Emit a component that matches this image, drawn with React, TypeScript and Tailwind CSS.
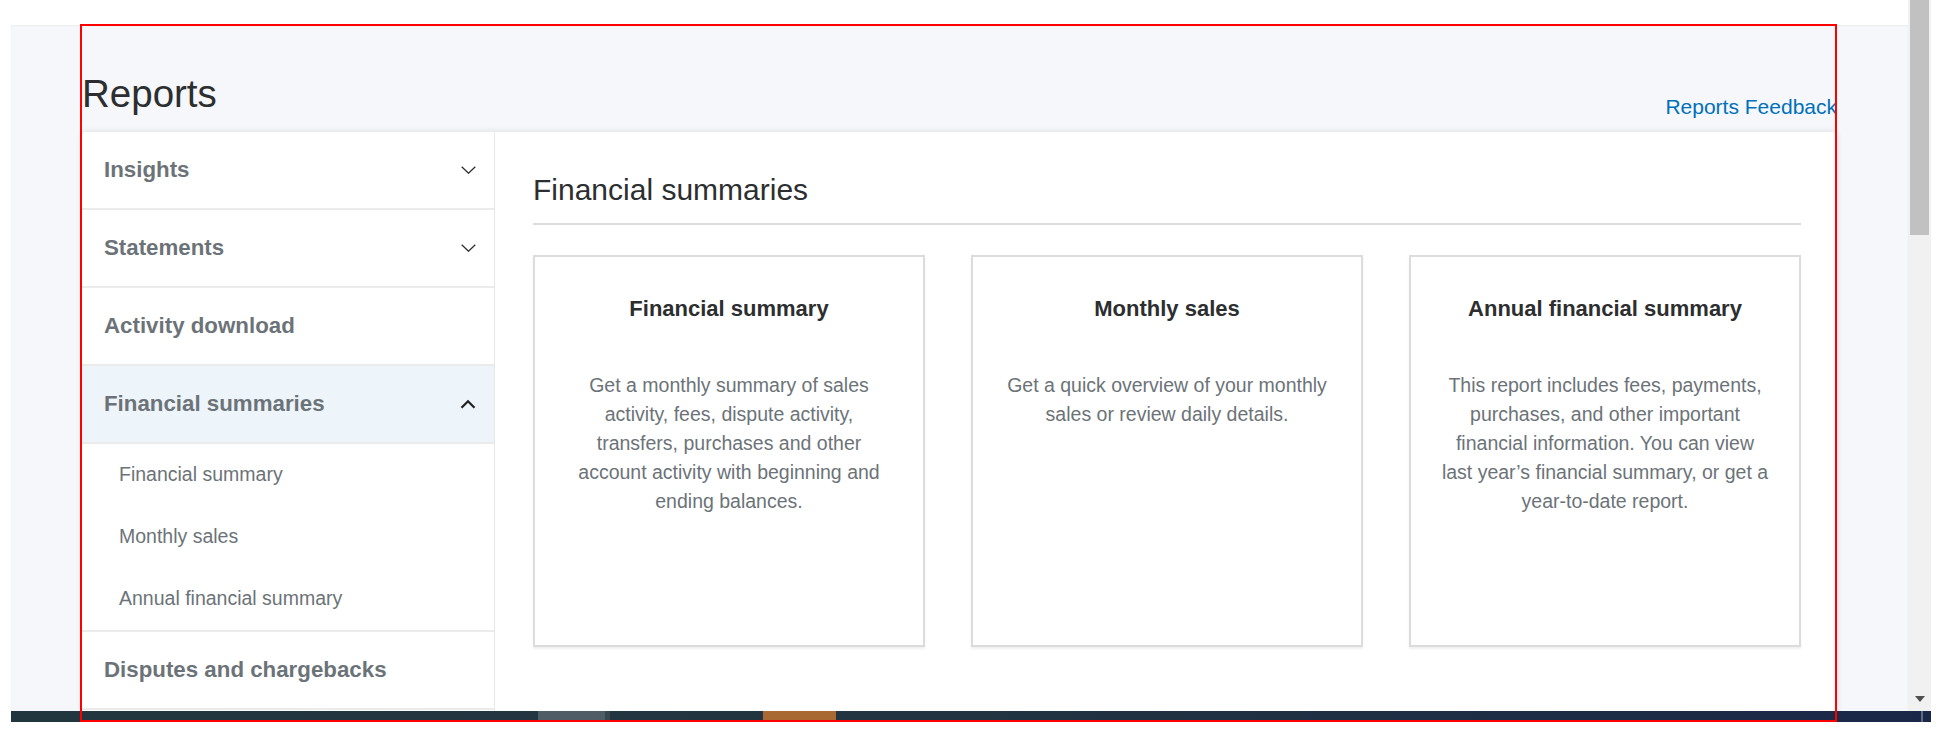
import React from 'react'

type NavItem = {
    label: string
    chevron?: 'down' | 'up'
    active?: boolean
    children?: string[]
}

const nav: NavItem[] = [
    { label: 'Insights', chevron: 'down' },
    { label: 'Statements', chevron: 'down' },
    { label: 'Activity download' },
    {
        label: 'Financial summaries',
        chevron: 'up',
        active: true,
        children: ['Financial summary', 'Monthly sales', 'Annual financial summary'],
    },
    { label: 'Disputes and chargebacks' },
]

const cards = [
    {
        title: 'Financial summary',
        text: 'Get a monthly summary of sales activity, fees, dispute activity, transfers, purchases and other account activity with beginning and ending balances.',
    },
    {
        title: 'Monthly sales',
        text: 'Get a quick overview of your monthly sales or review daily details.',
    },
    {
        title: 'Annual financial summary',
        text: 'This report includes fees, payments, purchases, and other important financial information. You can view last year\u2019s financial summary, or get a year-to-date report.',
    },
]

function Chevron({ dir }: { dir: 'down' | 'up' }) {
    if (dir === 'up') {
        return (
            <svg width="16" height="10" viewBox="0 0 16 10" fill="none">
                <path d="M1.5 8.8L8 2.2L14.5 8.8" stroke="#1f2122" strokeWidth="2.2" />
            </svg>
        )
    }
    return (
        <svg width="15" height="8" viewBox="0 0 15 8" fill="none">
            <path d="M0.7 0.7L7.5 7.2L14.3 0.7" stroke="#2c2e2f" strokeWidth="1.3" />
        </svg>
    )
}

function Sidebar() {
    return (
        <aside className="w-[413px] shrink-0 border-r border-[#e8e8e8] bg-white">
            {nav.map(item => (
                <div key={item.label}>
                    <div className={`flex h-[78px] items-center justify-between border-b-2 border-[#ebebeb] pl-[22px] pr-[18px] ${item.active ? 'bg-[#edf4fa]' : ''}`}>
                        <span className="text-[22.3px] font-bold text-[#6c7378]">{item.label}</span>
                        {item.chevron && <Chevron dir={item.chevron} />}
                    </div>
                    {item.children && (
                        <div className="border-b-2 border-[#ebebeb]">
                            {item.children.map(c => (
                                <div key={c} className="flex h-[62px] items-center pl-[37px] text-[19.5px] text-[#6c7378]">
                                    {c}
                                </div>
                            ))}
                        </div>
                    )}
                </div>
            ))}
        </aside>
    )
}

function Card({ title, text }: { title: string; text: string }) {
    return (
        <div className="h-[392px] border-2 border-[#dcdcdc] bg-white px-[28px] pt-[39px] text-center shadow-[0_2px_2px_rgba(0,0,0,0.06)]">
            <h3 className="text-[22px] leading-[26px] font-bold text-[#2c2e2f]">{title}</h3>
            <p className="mt-[49px] text-[19.5px] leading-[29px] text-[#6c7378]">{text}</p>
        </div>
    )
}

function Taskbar() {
    return (
        <div className="ml-[11px] flex h-[11px] w-[1920px] overflow-hidden bg-gradient-to-r from-[#22363f] via-[#213440] to-[#1b2748]">
            <div className="w-[527px]" />
            <div className="w-[67px] bg-[#4e5d66]" />
            <div className="w-[5px] bg-[#37474f]" />
            <div className="w-[153px]" />
            <div className="w-[73px] bg-[#a86a32]" />
            <div className="flex-1" />
            <div className="w-[2px] bg-[#5d6b80]" />
            <div className="w-[8px]" />
        </div>
    )
}

export default function App() {
    return (
        <div className="relative h-[747px] w-[1936px] overflow-hidden bg-white font-['Liberation_Sans',Arial,sans-serif]">
            <div className="ml-[11px] flex h-[711px] w-[1920px]">
                <div className="flex flex-1 flex-col">
                    <div className="h-[25px] bg-white" />
                    <main className="flex flex-1 flex-col overflow-hidden bg-[#f5f7fa] shadow-[inset_0_1px_2px_rgba(0,0,0,0.05)]">
                        <div className="ml-[71px] flex w-[1755px] flex-1 flex-col">
                            <header className="flex h-[107px] items-start justify-between">
                                <h1 className="pt-[50px] text-[38.5px] leading-[38px] text-[#2c2e2f]">Reports</h1>
                                <a className="mt-[70px] text-[21px] leading-[24px] text-[#0070ba]">Reports Feedback</a>
                            </header>
                            <div className="flex flex-1 overflow-hidden rounded-t-[4px] bg-white shadow-[0_0_6px_rgba(0,0,0,0.12)]">
                                <Sidebar />
                                <section className="flex-1 pl-[38px] pr-[36px] pt-[40px]">
                                    <h2 className="border-b-2 border-[#dcdcdc] pb-[15px] text-[30px] leading-[36px] text-[#2c2e2f]">
                                        Financial summaries
                                    </h2>
                                    <div className="mt-[30px] grid grid-cols-3 gap-x-[46px]">
                                        {cards.map(c => (
                                            <Card key={c.title} {...c} />
                                        ))}
                                    </div>
                                </section>
                            </div>
                        </div>
                    </main>
                </div>
                {/* scrollbar */}
                <div className="flex w-[23px] flex-col justify-between bg-[#f1f1f1]">
                    <div className="mx-[2px] h-[235px] bg-[#c1c1c1]" />
                    <div className="flex justify-center pb-[9px]">
                        <svg width="10" height="6" viewBox="0 0 10 6">
                            <path d="M0 0H10L5 6Z" fill="#505050" />
                        </svg>
                    </div>
                </div>
            </div>
            <Taskbar />

            {/* red annotation frame */}
            <div className="pointer-events-none absolute left-[80px] top-[24px] h-[698px] w-[1757px] border-2 border-[#ff0000]" />
        </div>
    )
}
